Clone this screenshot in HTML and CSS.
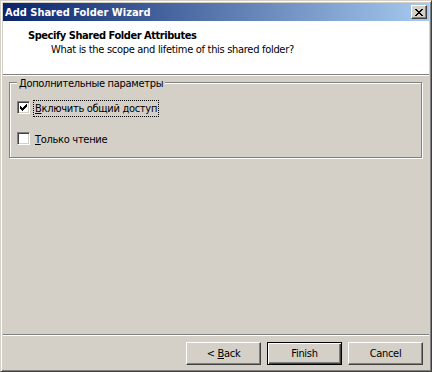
FILE: index.html
```html
<!DOCTYPE html>
<html lang="en">
<head>
    <meta charset="UTF-8">
    <meta name="viewport" content="width=device-width, initial-scale=1.0">
    <title>Add Shared Folder Wizard</title>
    <link rel="stylesheet" href="styles.css">
</head>
<body>

<div class="window">
    <div class="titlebar">
        <span class="title">Add Shared Folder Wizard</span>
        <button class="close-btn">
            <svg width="8" height="7" viewBox="0 0 8 7" shape-rendering="crispEdges">
                <path fill="#000" d="M0 0h2v1h-2zM6 0h2v1h-2zM1 1h2v1h-2zM5 1h2v1h-2zM2 2h4v1h-4zM3 3h2v1h-2zM2 4h4v1h-4zM1 5h2v1h-2zM5 5h2v1h-2zM0 6h2v1h-2zM6 6h2v1h-2z"/>
            </svg>
        </button>
    </div>

    <div class="header">
        <div class="header-title">Specify Shared Folder Attributes</div>
        <div class="header-sub">What is the scope and lifetime of this shared folder?</div>
    </div>

    <div class="content">
        <div class="group">
            <span class="group-label">Дополнительные параметры</span>
            <label class="check-row">
                <span class="checkbox">
                    <svg width="7" height="7" viewBox="0 0 7 7" shape-rendering="crispEdges">
                        <path fill="#000" d="M6 0h1v1h-1zM5 1h2v1h-2zM0 2h1v1h-1zM4 2h3v1h-3zM0 3h2v1h-2zM3 3h3v1h-3zM0 4h5v1h-5zM1 5h3v1h-3zM2 6h1v1h-1z"/>
                    </svg>
                </span>
                <span class="check-text focused"><u>В</u>ключить общий доступ</span>
            </label>
            <label class="check-row">
                <span class="checkbox"></span>
                <span class="check-text"><u>Т</u>олько чтение</span>
            </label>
        </div>
    </div>

    <div class="footer">
        <button class="btn">&lt; <u>B</u>ack</button>
        <button class="btn btn-default">Finish</button>
        <button class="btn">Cancel</button>
    </div>
</div>

</body>
</html>
```

FILE: styles.css
```css
body {
    margin: 0;
    padding: 0;
    background: #d4d0c8;
}
.window {
    width: 432px;
    height: 372px;
    box-sizing: border-box;
    border: 1px solid;
    border-color: #d4d0c8 #404040 #404040 #d4d0c8;
    padding: 2px;
    box-shadow: inset 1px 1px #fff, inset -1px -1px #808080;
    background: #d4d0c8;
    display: flex;
    flex-direction: column;
    font-family: Tahoma, "DejaVu Sans Condensed", "Liberation Sans", sans-serif;
    font-size: 11px;
    line-height: 13px;
    letter-spacing: -0.3px;
    color: #000;
}
.titlebar {
    height: 18px;
    flex: none;
    display: flex;
    align-items: flex-start;
    justify-content: space-between;
    padding: 0 2px;
    background: linear-gradient(to right, #0a246a, #a6caf0);
}
.title {
    color: #fff;
    font-weight: bold;
    letter-spacing: 0;
    margin-top: 3px;
}
.close-btn {
    width: 16px;
    height: 14px;
    margin-top: 2px;
    box-sizing: border-box;
    padding: 3px 0 0 3px;
    border: 1px solid;
    border-color: #fff #404040 #404040 #fff;
    box-shadow: inset -1px -1px #808080;
    background: #d4d0c8;
    display: flex;
    align-items: flex-start;
}
.close-btn svg {
    display: block;
}
.header {
    height: 54px;
    flex: none;
    box-sizing: border-box;
    background: #fff;
    border-bottom: 1px solid #808080;
    padding: 8px 0 0 25px;
}
.header-title {
    font-weight: bold;
    letter-spacing: -0.45px;
}
.header-sub {
    margin-top: 1px;
    padding-left: 23px;
}
.content {
    flex: 1;
    border-top: 1px solid #fff;
    padding: 6px 7px 0 6px;
}
.group {
    position: relative;
    height: 76px;
    box-sizing: border-box;
    border: 1px solid #808080;
    box-shadow: inset 1px 1px #fff, 1px 1px #fff;
    padding: 17px 7px 0 7px;
    display: flex;
    flex-direction: column;
    align-items: flex-start;
    gap: 14px;
}
.group-label {
    position: absolute;
    left: 7px;
    top: -6px;
    padding: 0 2px;
    background: #d4d0c8;
}
.check-row {
    display: flex;
    align-items: flex-start;
    gap: 3px;
    height: 17px;
}
.checkbox {
    width: 13px;
    height: 13px;
    margin-top: 1px;
    box-sizing: border-box;
    border: 1px solid;
    border-color: #808080 #fff #fff #808080;
    box-shadow: inset 1px 1px #404040, inset -1px -1px #d4d0c8;
    background: #fff;
    padding: 2px;
}
.checkbox svg {
    display: block;
}
.check-text {
    border: 1px solid transparent;
    padding: 1px;
}
.check-text.focused {
    border: 1px dotted #000;
}
.footer {
    height: 35px;
    flex: none;
    box-sizing: border-box;
    border-top: 1px solid #808080;
    box-shadow: inset 0 1px #fff;
    padding: 7px 6px 0 0;
    display: flex;
    justify-content: flex-end;
    align-items: flex-start;
    gap: 6px;
}
.btn {
    width: 75px;
    height: 23px;
    box-sizing: border-box;
    padding: 0;
    border: 1px solid;
    border-color: #fff #404040 #404040 #fff;
    box-shadow: inset -1px -1px #808080;
    background: #d4d0c8;
    font: inherit;
    letter-spacing: inherit;
    color: #000;
}
.btn-default {
    border-color: #000;
    box-shadow: inset 1px 1px #fff, inset -1px -1px #404040, inset -2px -2px #808080;
}
```
